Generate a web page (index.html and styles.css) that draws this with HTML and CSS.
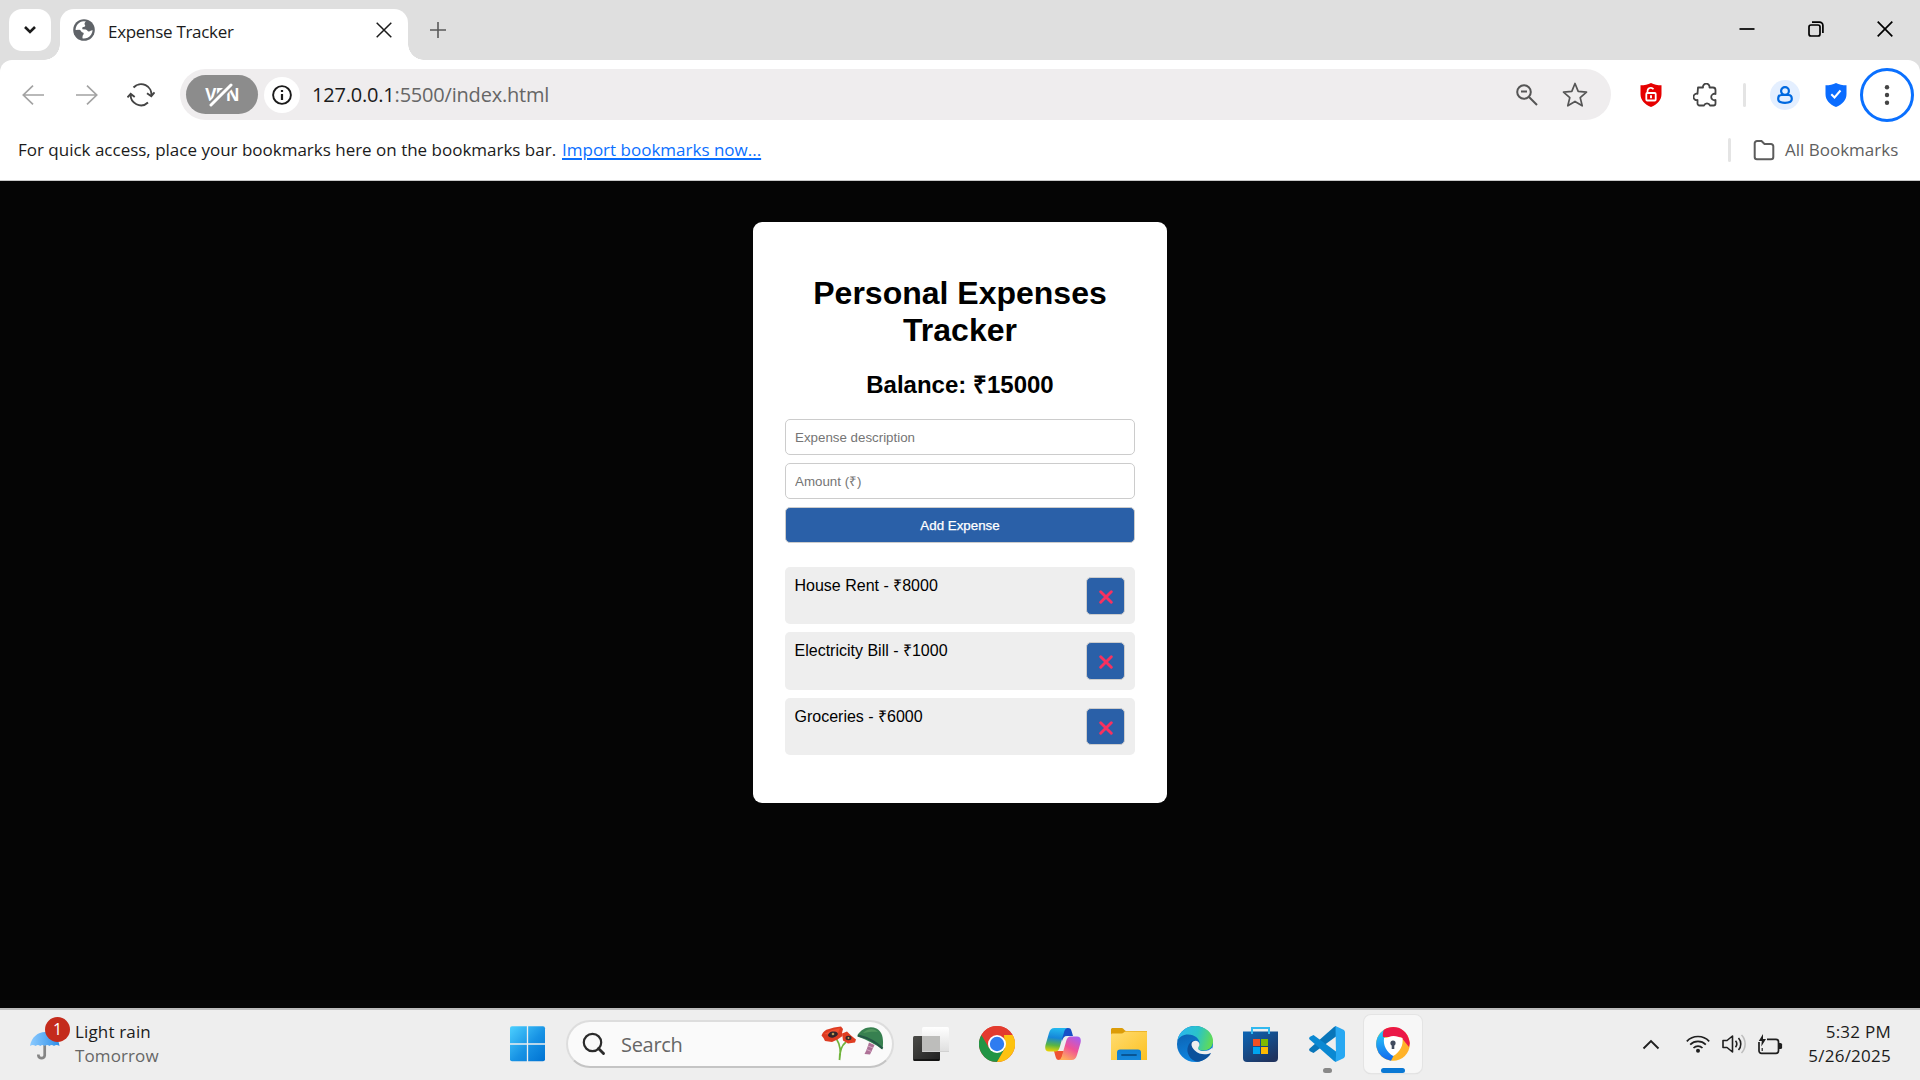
FILE: index.html
```html
<!DOCTYPE html>
<html lang="en">
<head>
<meta charset="utf-8">
<title>Expense Tracker</title>
<link rel="stylesheet" href="styles.css">
</head>
<body>
<header class="tabstrip">
  <button class="tab-search" aria-label="Search tabs"><svg width="14" height="10" viewBox="0 0 14 10"><path d="M2 2l5 5 5-5" fill="none" stroke="#1b1b1b" stroke-width="2.6"/></svg></button>
  <div class="tab">
    <svg class="favicon" width="22" height="22" viewBox="0 0 22 22"><circle cx="11" cy="11" r="10.8" fill="#5f6368"/><path d="M13 2.4c-1.5 1-1.9 2.3-1 3.6.7 1-.2 2.2-1.7 2-1.2 0-1.1 1.4-.8 2.2l3.3.2c1.4.3 1.6 1.9 3 2 1.600.1 2-1.400 3.800-1.200-.2 3.200-2.200 6.200-5 7.500-1.600.7-3.600 1-5.200.6.3-1.500-.1-2.600.8-3.500.8-.8.7-2.300-.5-2.400-1.800-.1-1.500-2.600-3.700-2.600-1.100 0-2.200.3-3.400.1C2.700 6.400 6 2.500 10.700 2.200z" fill="#fff"/><path d="M4.500 7.500 8 4l1.800 1.500-.8 2.400-2 2.400H4z" fill="#fff"/></svg>
    <span class="tab-title">Expense Tracker</span>
    <svg class="tab-close" width="16" height="16" viewBox="0 0 16 16"><path d="M.7.700l14.600 14.600M15.300.7.700 15.300" fill="none" stroke="#1b1b1b" stroke-width="1.500"/></svg>
  </div>
  <svg class="new-tab" width="16" height="16" viewBox="0 0 16 16"><path d="M8 0v16M0 8h16" stroke="#5a5a5a" stroke-width="1.600"/></svg>
  <div class="window-controls">
    <svg width="16" height="16" viewBox="0 0 16 16"><path d="M.5 8h15" stroke="#000" stroke-width="1.700"/></svg>
    <svg width="16" height="16" viewBox="0 0 16 16" fill="none" stroke="#000" stroke-width="1.700"><rect x="1" y="4" width="11" height="11" rx="2"/><path d="M4 1.200h7.500a3.400 3.400 0 0 1 3.400 3.400V12"/></svg>
    <svg width="16" height="16" viewBox="0 0 16 16"><path d="M.7.700l14.600 14.600M15.300.7.700 15.300" stroke="#000" stroke-width="1.700"/></svg>
  </div>
</header>
<div class="chrome">
<nav class="toolbar">
  <div class="nav-buttons">
    <svg width="22" height="20" viewBox="0 0 22 20" fill="none" stroke="#a3a3a3" stroke-width="1.700"><path d="M11 .7 1.300 10l9.700 9.300M1.300 10H22"/></svg>
    <svg width="22" height="20" viewBox="0 0 22 20" fill="none" stroke="#a3a3a3" stroke-width="1.700"><path d="M11 .7 20.700 10 11 19.300M20.700 10H0"/></svg>
    <svg width="28" height="24" viewBox="0 0 28 24" fill="none" stroke="#444" stroke-width="1.900"><path d="M6.500 4.500A10.300 10.300 0 0 1 24.300 13M21 19.500A10.300 10.300 0 0 1 3.700 11M20 10.200l4.300 3 3.200-3.800M.5 14.400l3.200-3.600 4 3.200"/></svg>
  </div>
  <div class="omnibox">
    <div class="vpn">VPN<svg width="24" height="24" viewBox="0 0 24 24"><path d="M2 22 22 2" stroke="#8c8c8c" stroke-width="7"/><path d="M2 22 22 2" stroke="#fff" stroke-width="3" stroke-linecap="round"/></svg></div>
    <div class="site-info"><svg width="20" height="20" viewBox="0 0 20 20"><circle cx="10" cy="10" r="8.900" fill="none" stroke="#1b1b1b" stroke-width="1.900"/><path d="M10 9v6M10 5v2" stroke="#1b1b1b" stroke-width="2.200"/></svg></div>
    <span class="url">127.0.0.1<i>:5500/index.html</i></span>
    <svg class="zoom-icon" width="22" height="22" viewBox="0 0 22 22" fill="none" stroke="#555" stroke-width="2"><circle cx="8" cy="8" r="6.800"/><path d="M13 13l8 8M5 7.500h6"/></svg>
    <svg class="star" width="26" height="26" viewBox="0 0 26 26"><path d="M13 1.500l3.200 7.900 8.300.7-6.300 5.500 2 8.200L13 19.400l-7.200 4.400 2-8.200-6.300-5.500 8.300-.7z" fill="none" stroke="#555" stroke-width="1.700" stroke-linejoin="round"/></svg>
  </div>
  <div class="extensions">
    <svg class="red-shield" width="22" height="24" viewBox="0 0 22 24"><path d="M11 0c3 1.700 6.500 2.300 10.500 2.300V11c0 6-4 10.300-10.500 13C4.500 21.300.5 17 .5 11V2.300C4.500 2.300 8 1.700 11 0z" fill="#e60000"/><path d="M7.500 10V8.300a3.300 3.300 0 0 1 6-2" fill="none" stroke="#fff" stroke-width="1.700"/><rect x="6.300" y="10" width="9.400" height="7.500" rx="1" fill="none" stroke="#fff" stroke-width="1.800"/><path d="M11 12.200v3" stroke="#fff" stroke-width="1.900"/></svg>
    <svg class="puzzle" width="24" height="24" viewBox="0 0 24 24"><path d="M5 4.500h5a3.300 3.300 0 1 1 6.500 0H20a2.500 2.500 0 0 1 2.500 2.500v4a3.200 3.200 0 1 0 0 6v3.500a2 2 0 0 1-2 2H17a3.200 3.200 0 0 0-6 0H6.500a2 2 0 0 1-2-2V17a3.200 3.200 0 1 1 0-6.200z" fill="none" stroke="#444" stroke-width="1.800" stroke-linejoin="round"/></svg>
    <span class="divider"></span>
    <div class="avatar"><svg width="16" height="18" viewBox="0 0 16 18" fill="none" stroke="#0069e0" stroke-width="2.200"><circle cx="8" cy="5" r="3.900"/><path d="M4.500 9h7c2 0 3.300 1.800 3.300 4 0 2.500-2.500 3.800-6.800 3.800S1.200 15.500 1.200 13c0-2.200 1.300-4 3.300-4z"/></svg></div>
    <svg class="blue-shield" width="22" height="24" viewBox="0 0 22 24"><path d="M11 0c3 1.700 6.500 2.300 10.500 2.300V11c0 6-4 10.300-10.500 13C4.500 21.300.5 17 .5 11V2.300C4.500 2.300 8 1.700 11 0z" fill="#0a6cff"/><path d="M6.300 11.300 9.500 14.500l6-7" fill="none" stroke="#fff" stroke-width="2"/></svg>
    <div class="menu-button"><svg width="6" height="20" viewBox="0 0 6 20" fill="#444"><circle cx="3" cy="2.300" r="2.200"/><circle cx="3" cy="10" r="2.200"/><circle cx="3" cy="17.700" r="2.200"/></svg></div>
  </div>
</nav>
<div class="bookmarks">
  <span class="hint">For quick access, place your bookmarks here on the bookmarks bar.</span>
  <a class="import">Import bookmarks now...</a>
  <span class="divider push"></span>
  <svg class="folder" width="22" height="22" viewBox="0 0 22 22"><path d="M4 2h4.500l3 3H18a2.300 2.300 0 0 1 2.300 2.300V18A2.300 2.300 0 0 1 18 20.300H4A2.300 2.300 0 0 1 1.700 18V4.300A2.300 2.300 0 0 1 4 2z" fill="none" stroke="#5c5c5c" stroke-width="2"/></svg>
  <span class="all">All Bookmarks</span>
</div>
</div>
<main class="page">
  <section class="card">
    <h1>Personal Expenses Tracker</h1>
    <h2>Balance: ₹15000</h2>
    <form class="form">
      <input type="text" placeholder="Expense description">
      <input type="text" placeholder="Amount (₹)">
      <button type="button">Add Expense</button>
    </form>
    <ul class="list">
      <li><span>House Rent - ₹8000</span><button class="remove" aria-label="Remove"><svg width="14" height="14" viewBox="0 0 14 14"><path d="M1.700 1.700l10.600 10.600M12.300 1.700 1.700 12.300"/></svg></button></li>
      <li><span>Electricity Bill - ₹1000</span><button class="remove" aria-label="Remove"><svg width="14" height="14" viewBox="0 0 14 14"><path d="M1.700 1.700l10.600 10.600M12.300 1.700 1.700 12.300"/></svg></button></li>
      <li><span>Groceries - ₹6000</span><button class="remove" aria-label="Remove"><svg width="14" height="14" viewBox="0 0 14 14"><path d="M1.700 1.700l10.600 10.600M12.300 1.700 1.700 12.300"/></svg></button></li>
    </ul>
  </section>
</main>
<footer class="taskbar">
  <div class="weather">
    <div class="weather-icon">
      <svg width="32" height="30" viewBox="0 0 32 30"><defs><linearGradient id="um" x1="0" x2="1"><stop offset="0" stop-color="#8ccbff"/><stop offset="1" stop-color="#2f8fe8"/></linearGradient></defs><path d="M14.700 12v12.500a3.200 3.200 0 0 1-6.300 0v-1" fill="none" stroke="#858585" stroke-width="2.700"/><path d="M0 15C1.500 6 8 1 15 1s13.500 5 14.500 14c-2-1.500-4-1.500-5.500 0-1.600-1.400-3.200-1.400-4.600 0-1.500-1.400-3-1.400-4.600 0-1.500-1.400-3-1.400-4.600 0-1.500-1.400-3-1.400-4.600 0C3.600 13.500 2 13.500 0 15z" fill="url(#um)"/></svg>
      <span class="badge">1</span>
    </div>
    <div class="weather-text"><span class="now">Light rain</span><span class="next">Tomorrow</span></div>
  </div>
  <div class="dock">
    <svg class="start" width="36" height="36" viewBox="0 0 36 36"><defs><linearGradient id="win" x1="0" y1="0" x2="1" y2="1" ><stop offset="0" stop-color="#4cd0ff"/><stop offset=".55" stop-color="#1792e4"/><stop offset="1" stop-color="#0072d2"/></linearGradient><mask id="wm"><rect width="36" height="36" fill="#fff"/><path d="M17.500 0v36M0 18h36" stroke="#000" stroke-width="1.300"/></mask></defs><rect x="0" y=".3" width="35" height="35" rx="2" fill="url(#win)" mask="url(#wm)"/></svg>
    <div class="search">
      <svg width="24" height="24" viewBox="0 0 24 24" fill="none" stroke="#2b2b2b"><circle cx="10.500" cy="10.500" r="8.700" stroke-width="2.200"/><path d="M16.500 16.500l5 5" stroke-width="2.900" stroke-linecap="round"/></svg>
      <span>Search</span>
      <svg class="flowers" width="64" height="36" viewBox="0 0 64 36">
        <path d="M15.500 13c4 6 4.500 13 3 21M25 16c-4 3-6.500 8-6.500 18" fill="none" stroke="#6fb33b" stroke-width="1.700"/>
        <path d="M.5 9.500C2 6 4 3.500 8 3l5-1.500L20 .5l2 2.500-1 4 .5 3-5 3.500L11 16l-7-1-1.500-3z" fill="#dd3b22"/><path d="M3 8l8-4 8-2-2 5-6 2z" fill="#f05132"/><ellipse cx="12" cy="8.500" rx="5" ry="3" fill="#30262c" transform="rotate(-12 12 9)"/><circle cx="12" cy="8" r="1.300" fill="#bf9a50"/>
        <path d="M21 7.500l5-2 4 4 5 4-1 3-7 1-5-3z" fill="#df3d22"/><ellipse cx="27.500" cy="12" rx="3" ry="2.200" fill="#3b2b2e"/><circle cx="27.500" cy="12" r=".9" fill="#d2aa58"/>
        <path d="M48 16.500l5.500 2.500-4.500 9.500-5.500-.5 2-4z" fill="#ad7196"/><path d="M47 20l5 2M45.500 23.500l5 2" stroke="#d4a7c4" stroke-width="1"/>
        <path d="M36.500 9C41 2 49-.5 55.500 2.500 61.500 6 63 12 61.500 23.500c-7-5-15-9.500-25-13z" fill="#378050"/><path d="M37 9.500c9 2 18 6.500 24.500 13" stroke="#245846" stroke-width="2.200" fill="none"/><path d="M42 7C47 2 53 2 57 6c-4-.5-9 0-15 1z" fill="#61a566" opacity=".6"/>
      </svg>
    </div>
    <div class="app"><svg width="36" height="36" viewBox="0 0 36 36"><defs><linearGradient id="tv" x1="0" y1="0" x2="1" y2="1"><stop offset="0" stop-color="#4b4b48"/><stop offset="1" stop-color="#202020"/></linearGradient><linearGradient id="tw" x1="0" y1="0" x2="0" y2="1"><stop offset="0" stop-color="#fff"/><stop offset="1" stop-color="#dedede"/></linearGradient></defs><rect y="10" width="27" height="25" rx="1.500" fill="url(#tv)"/><path d="M1 34h25" stroke="#080808" stroke-width="1.300"/><rect x="9" y="1" width="27" height="25" rx="1.500" fill="url(#tw)"/><path d="M9 10h18v16H9z" fill="#bdbdbb"/><path d="M9.500 25.500H36" stroke="#d1d1d1"/></svg></div>
    <div class="app"><svg width="36" height="36" viewBox="0 0 36 36"><circle cx="18" cy="18" r="18" fill="#e33b2e"/><path d="M2.400 9A18 18 0 0 0 18 36l8-13.500H18z" fill="#229545"/><path d="M33.600 9A18 18 0 0 1 18 36l7.800-13.500L25 9z" fill="#fdc20f"/><path d="M2.400 9A18 18 0 0 1 33.600 9H18l-8 13z" fill="#e33b2e"/><circle cx="18" cy="18" r="9" fill="#fff"/><circle cx="18" cy="18" r="7.200" fill="#2f7cf0"/></svg></div>
    <div class="app"><svg width="36" height="34" viewBox="0 0 36 34"><defs><linearGradient id="ca" x1=".3" y1="0" x2=".2" y2="1"><stop offset="0" stop-color="#22b7ee"/><stop offset=".4" stop-color="#1686d8"/><stop offset=".72" stop-color="#59b544"/><stop offset="1" stop-color="#f0d500"/></linearGradient><linearGradient id="cb" x1=".8" y1="0" x2=".3" y2="1"><stop offset="0" stop-color="#a85cf0"/><stop offset=".5" stop-color="#f05296"/><stop offset="1" stop-color="#ffb05c"/></linearGradient></defs><path d="M17 1h6c2.500 0 3 1 3.700 3.500L28 9h-6c-3 0-4 2-5 5z" fill="#174fc7"/><path d="M9 24h10l-3 9h-2c-2.200 0-2.800-1-3.500-3.500z" fill="#ef5332"/><path d="M9.500 1h13c-2.500.5-3 2.500-3.700 5l-4 14c-.9 3-2 4.500-4.600 4.500H4C.7 24.500-.4 22 .5 18L4 6C5 2.500 6.500 1 9.500 1z" fill="url(#ca)"/><path d="M26.500 33h-13c2.500-.5 3-2.500 3.700-5l4-14c.9-3 2-4.500 4.600-4.500H32c3.300 0 4.400 2.500 3.500 6.500L32 28c-1 3.500-2.500 5-5.500 5z" fill="url(#cb)"/></svg></div>
    <div class="app"><svg width="36" height="34" viewBox="0 0 36 34"><defs><linearGradient id="fo" x1="0" y1="0" x2="1" y2="1"><stop offset="0" stop-color="#ffdc70"/><stop offset="1" stop-color="#fcc122"/></linearGradient><linearGradient id="fb" x1="0" y1="0" x2="0" y2="1"><stop offset="0" stop-color="#0f7fd2"/><stop offset="1" stop-color="#1688dc"/></linearGradient></defs><path d="M1 1h10c1.500 0 2.500 3 4 3h21v12H0V2z" fill="#dc9c08"/><path d="M0 8c0-1 .5-1.500 1.500-1.500h9c2 0 2.500-2 4.500-2h21V33H0z" fill="url(#fo)"/><path d="M6 33v-7.500a3 3 0 0 1 3-3h18a3 3 0 0 1 3 3V33z" fill="url(#fb)"/><path d="M11 28h14" stroke="#085594" stroke-width="1.800" stroke-linecap="round"/></svg></div>
    <div class="app"><svg width="36" height="36" viewBox="0 0 36 36"><defs><linearGradient id="ea" x1="0" y1=".3" x2="1" y2=".5"><stop offset="0" stop-color="#2bb7f2"/><stop offset=".55" stop-color="#2ac3c8"/><stop offset="1" stop-color="#63dc52"/></linearGradient><linearGradient id="eb" x1=".2" y1="0" x2=".5" y2="1"><stop offset="0" stop-color="#0c5ba9"/><stop offset="1" stop-color="#0e88e4"/></linearGradient></defs><circle cx="18" cy="18" r="18" fill="url(#eb)"/><path d="M.3 15C2 6 9 0 18 0c10.500 0 18 7 18 15 0 6-4 9.500-9.500 9.500-4 0-6-1.500-5.500-3 .3-1 1.700-1.700 1.700-4C22.700 13 18 8.500 11 8.500 6 8.500 2 11 .3 15z" fill="url(#ea)"/><path d="M15 15c-4 3-5.500 8-4 12.500C12.500 32 16 35 20.500 35.800 26.500 35 31 32 33.500 28c.6-1-.1-1.500-1-1-5 2.500-11 1-14-2.500-2.800-3.200-2.800-7 .3-10z" fill="#0c509b"/><path d="M14.500 18c.5-3 4.500-4.200 6.700-2.300 1.700 1.500 1.600 3.400.3 5.300-1.300 2 .8 4 5 4 4 0 6.500-1 9-3.500L36 25l-2 2c-5 2.500-12 1.500-16.200-2.500-1.900-2-3.500-4-3.300-6.500z" fill="#eee"/></svg></div>
    <div class="app"><svg width="36" height="36" viewBox="0 0 36 36"><defs><linearGradient id="st" x1="0" y1="0" x2=".7" y2="1"><stop offset="0" stop-color="#0b65b6"/><stop offset="1" stop-color="#20345f"/></linearGradient></defs><path d="M0 5.500h35V32a4 4 0 0 1-4 4H4a4 4 0 0 1-4-4z" fill="url(#st)"/><path d="M9 8V2h17v6" fill="none" stroke="#32b9ef" stroke-width="2"/><path fill="#f25022" d="M10 13h7v7h-7z"/><path fill="#7fba00" d="M18 13h7v7h-7z"/><path fill="#00a4ef" d="M10 21h7v7h-7z"/><path fill="#ffb900" d="M18 21h7v7h-7z"/></svg></div>
    <div class="app running"><svg width="36" height="36" viewBox="0 0 36 36"><path d="M27 0v10.500L4.500 27 1 25.300c-1-.7-1.200-1.800-.3-2.700L25 1z" fill="#0875b9"/><path d="M27 36V25.500L4.500 9 1 10.700c-1 .7-1.200 1.800-.3 2.700L25 35z" fill="#0a88d2"/><path d="M26.500 0 34 3.500c1.300.6 2 1.500 2 3v23c0 1.500-.7 2.400-2 3L26.500 36 27 30z" fill="#28a8f2"/></svg></div>
    <div class="app active"><svg width="34" height="34" viewBox="0 0 34 34"><defs><linearGradient id="av" x1="0" y1="0" x2="0" y2="1"><stop offset="0" stop-color="#29d0f8"/><stop offset="1" stop-color="#1368ee"/></linearGradient><linearGradient id="ay" x1="0" x2="1"><stop offset="0" stop-color="#ffc21b"/><stop offset="1" stop-color="#ffae2c"/></linearGradient></defs><circle cx="17" cy="17" r="16.800" fill="url(#ay)"/><path d="M8 2.800A16.800 16.800 0 0 0 15 33.700l3-5.700-9-14z" fill="url(#av)"/><path d="M8 2.800C16-2.500 31-1 33.800 16L33 20 25 10 7 10C6.500 7 7 4.500 8 2.800z" fill="#eb1847"/><path d="M8 11c4 0 6-2 9.500-2s5.500 1.500 9 2c1 7.500-2.500 14-9.300 18C10.500 25 7 18.500 8 11z" fill="#fff"/><circle cx="17" cy="16" r="2.600" fill="#414b5e"/><path d="M15.700 16h2.600v6h-2.600z" fill="#414b5e"/></svg></div>
  </div>
  <div class="tray">
    <svg class="caret" width="18" height="11" viewBox="0 0 18 11"><path d="M1.500 9.500 9 2l7.500 7.500" fill="none" stroke="#1f1f1f" stroke-width="1.900"/></svg>
    <svg class="wifi" width="24" height="18" viewBox="0 0 24 18" fill="none" stroke="#1f1f1f" stroke-width="1.700"><path d="M.8 6.300a15.500 15.500 0 0 1 22.400 0M4.200 9.700a11 11 0 0 1 15.600 0M7.500 13a6.400 6.400 0 0 1 9 0"/><circle cx="12" cy="15.800" r="2" fill="#1f1f1f" stroke="none"/></svg>
    <svg class="sound" width="25" height="20" viewBox="0 0 25 20" fill="none" stroke="#1f1f1f" stroke-width="1.600"><path d="M1 6.500h4L10.500 2v16L5 13.500H1z" stroke-linejoin="round"/><path d="M13.500 6.800a5 5 0 0 1 0 6.400M16.500 4a9 9 0 0 1 0 12"/><path d="M19.500 1a13 13 0 0 1 0 18" stroke="#bdbdbd"/></svg>
    <svg class="battery" width="25" height="21" viewBox="0 0 25 21"><path d="M9 5.300h9a2.500 2.500 0 0 1 2.500 2.500v9a2.500 2.500 0 0 1-2.500 2.500H3.500A2.500 2.500 0 0 1 1 16.800V8" fill="none" stroke="#1f1f1f" stroke-width="1.700"/><path d="M21 9h1.500a1.600 1.600 0 0 1 1.600 1.600v2.800a1.600 1.600 0 0 1-1.600 1.600H21z" fill="#1f1f1f"/><path d="M5 0 .8 7h3l-.5 5.500L8 5H5z" fill="#1f1f1f"/><path d="M4.200 14v3" stroke="#1f1f1f" stroke-width="1.200"/></svg>
    <div class="clock"><span class="time">5:32 PM</span><span class="date">5/26/2025</span></div>
  </div>
</footer>
</body>
</html>
```
FILE: styles.css
```css
* { box-sizing: border-box; }
body {
  margin: 0;
  width: 1920px;
  height: 1080px;
  overflow: hidden;
  display: flex;
  flex-direction: column;
  background: #dfdfdf;
  font-family: "Open Sans", "Noto Sans", sans-serif;
  font-size: 17px;
  color: #1b1b1b;
}
svg { display: block; flex: none; }
button { font: inherit; border: 0; padding: 0; }
span, a { white-space: nowrap; }

/* Tab strip */
.tabstrip { height: 60px; flex: none; display: flex; align-items: flex-start; padding: 9px 27px 0 9px; }
.tab-search { width: 42px; height: 42px; border-radius: 13px; background: #fff; display: flex; align-items: center; justify-content: center; margin-right: 9px; }
.tab { position: relative; width: 348px; height: 51px; background: #fff; border-radius: 14px 14px 0 0; display: flex; align-items: flex-start; padding: 10px 16px 0 13px; }
.tab::before, .tab::after { content: ""; position: absolute; bottom: 0; width: 16px; height: 16px; }
.tab::before { left: -16px; background: radial-gradient(circle at 0 0, transparent 15.5px, #fff 16px); }
.tab::after { right: -16px; background: radial-gradient(circle at 100% 0, transparent 15.5px, #fff 16px); }
.tab-title { margin-left: 13px; padding-top: 1px; line-height: 24px; letter-spacing: -0.3px; }
.tab-close { margin: 3px 0 0 auto; }
.new-tab { margin: 13px 0 0 22px; }
.window-controls { margin: 12px 0 0 auto; display: flex; gap: 53px; }

/* Toolbar */
.chrome { flex: none; height: 121px; background: #fff; border-radius: 12px 12px 0 0; border-bottom: 1px solid #c8c8c8; }
.toolbar { height: 69px; display: flex; align-items: center; padding: 0 6px 0 22px; }
.nav-buttons { display: flex; align-items: center; gap: 32px; width: 158px; }
.nav-buttons svg:last-child { margin-left: -3px; }
.omnibox { width: 1431px; height: 51px; border-radius: 26px; background: #efedee; display: flex; align-items: center; padding: 0 23px 0 6px; }
.vpn { position: relative; width: 72px; height: 39px; border-radius: 20px; background: #8c8c8c; color: #fff; font-weight: 700; font-size: 17px; letter-spacing: -0.6px; display: flex; align-items: center; justify-content: center; }
.vpn svg { position: absolute; left: 23px; top: 8px; }
.site-info { width: 36px; height: 36px; border-radius: 50%; background: #fff; margin-left: 6px; display: flex; align-items: center; justify-content: center; }
.url { margin-left: 12px; font-size: 20px; line-height: 28px; letter-spacing: -0.2px; }
.url i { font-style: normal; color: #666; }
.zoom-icon { margin-left: auto; }
.star { margin-left: 24px; }
.extensions { flex: 1; display: flex; align-items: center; }
.red-shield { margin-left: 29px; }
.puzzle { margin-left: 31px; }
.divider { width: 3px; height: 24px; border-radius: 2px; background: #e4e4e4; }
.extensions .divider { margin-left: 26px; }
.avatar { width: 30px; height: 30px; margin-left: 24px; border-radius: 50%; background: #e4efff; display: flex; align-items: center; justify-content: center; }
.blue-shield { margin-left: 25px; }
.menu-button { width: 54px; height: 54px; margin-left: auto; border: 3px solid #0a70ff; border-radius: 50%; display: flex; align-items: center; justify-content: center; }

/* Bookmarks bar */
.bookmarks { height: 41px; display: flex; align-items: center; padding: 0 23px 0 18px; }
.hint { width: 544px; letter-spacing: -0.005px; }
.import { color: #0a6fff; text-decoration: underline; text-decoration-thickness: 2px; text-underline-offset: 2px; }
.push { margin-left: auto; }
.folder { margin-left: 22px; }
.all { margin-left: 10px; width: 112px; color: #5f5f5f; }

/* Expense tracker */
.page { flex: none; height: 827px; padding-top: 41px; background: #050505; font-family: "Liberation Sans", Arial, sans-serif; color: #000; }
.card { width: 414px; height: 581px; margin: 0 auto; padding: 32px; background: #fff; border-radius: 9px; text-align: center; }
.card h1 { margin: 21px 0 22px; font-size: 32px; line-height: 37px; }
.card h2 { margin: 0 0 20px; font-size: 24px; line-height: 28px; }
.form { display: flex; flex-direction: column; gap: 8px; }
.form input, .form button { height: 36px; border: 1px solid #ccc; border-radius: 5px; font: 13.333px "Liberation Sans", Arial, sans-serif; }
.form input { padding: 0 9px; background: #fff; }
.form input::placeholder { color: #757575; }
.form button { background: #2a60a8; color: #fff; -webkit-text-stroke: 0.25px #fff; }
.list { list-style: none; margin: 24px 0 0; padding: 0; display: flex; flex-direction: column; gap: 8px; }
.list li { height: 57.4px; padding: 10px 10px 10px 9.500px; background: #eee; border-radius: 5px; display: flex; justify-content: space-between; align-items: flex-start; font-size: 16px; line-height: 18px; }
.remove { width: 38.6px; height: 37.600px; border: 1px solid #ccc; border-radius: 5px; background: #2a60a8; display: flex; align-items: center; justify-content: center; padding-top: 2px; }
.remove path { stroke: #f8315f; stroke-width: 2.9; stroke-linecap: round; }

/* Taskbar */
.taskbar { height: 72px; flex: none; background: #eee; border-top: 2px solid #bdbdbd; display: flex; align-items: center; padding-bottom: 2px; }
.weather { width: 510px; display: flex; align-items: center; padding-left: 30px; }
.weather-icon { position: relative; width: 45px; padding-top: 3px; }
.badge { position: absolute; left: 15px; top: -11px; width: 25px; height: 25px; border-radius: 50%; background: #c42b1c; color: #fff; font-size: 16px; line-height: 24px; text-align: center; }
.weather-text, .clock { display: flex; flex-direction: column; line-height: 24px; }
.now { letter-spacing: 0.15px; }
.next { color: #666; letter-spacing: 0.1px; }
.dock { display: flex; align-items: center; }
.search { width: 328px; height: 48px; margin: 0 4px 0 20px; border: 2px solid #ddd; border-bottom-color: #c4c4c4; border-radius: 24px; background: #fafafa; display: flex; align-items: center; padding: 0 7px 0 14px; }
.search span { margin-left: 15px; font-size: 20px; color: #666; letter-spacing: -0.3px; }
.flowers { margin-left: auto; }
.app { position: relative; width: 66px; height: 58px; display: flex; align-items: center; justify-content: center; }
.running::after, .active::after { content: ""; position: absolute; bottom: 0; height: 5px; border-radius: 3px; }
.running::after { left: 29px; width: 9px; background: #888; }
.active { width: 58px; margin-left: 4px; background: #f7f7f7; border-radius: 7px; box-shadow: 0 0 0 1px #e4e4e4, 0 1px 1px #ccc; }
.active::after { left: 17px; width: 24px; background: #0a78d4; }
.tray { flex: 1; display: flex; align-items: center; padding-right: 29px; }
.caret { margin-left: 220px; }
.wifi { margin-left: 26px; }
.sound { margin-left: 12px; }
.battery { margin-left: 11px; }
.clock { margin-left: auto; text-align: right; letter-spacing: 0.25px; }
```
